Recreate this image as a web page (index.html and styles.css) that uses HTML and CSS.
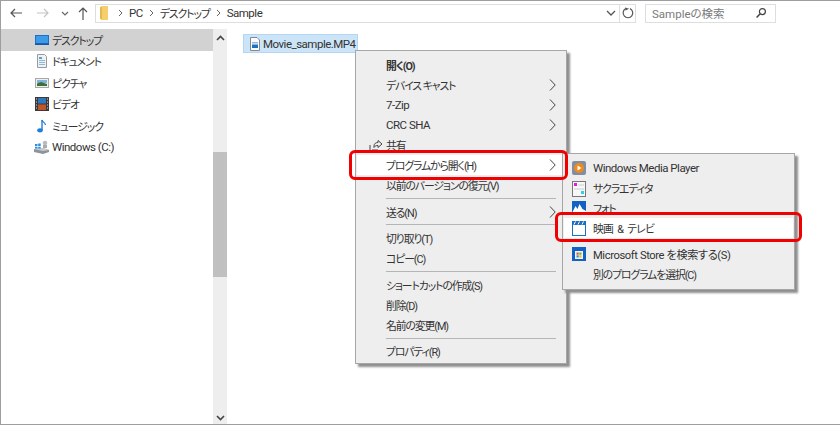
FILE: index.html
```html
<!DOCTYPE html>
<html lang="ja">
<head>
<meta charset="utf-8">
<title>Sample</title>
<link rel="stylesheet" href="styles.css">
</head>
<body>
<div class="window">
  <header class="toolbar">
    <nav class="navs">
      <svg class="nav-btn" width="16" height="16" viewBox="0 0 16 16"><path d="M14 8H3M7 4 3 8l4 4" fill="none" stroke="#555" stroke-width="1.2"/></svg>
      <svg class="nav-btn" width="16" height="16" viewBox="0 0 16 16"><path d="M2 8h11M9 4l4 4-4 4" fill="none" stroke="#c4c4c4" stroke-width="1.2"/></svg>
      <svg class="nav-small" width="10" height="16" viewBox="0 0 10 16"><path d="M2 7l3 3 3-3" fill="none" stroke="#666" stroke-width="1.2"/></svg>
      <svg class="nav-up" width="16" height="16" viewBox="0 0 16 16"><path d="M8 15V3M4 7l4-4 4 4" fill="none" stroke="#555" stroke-width="1.2"/></svg>
    </nav>
    <div class="address">
      <svg class="folder" width="12" height="16" viewBox="0 0 12 16"><path d="M2 1h7v14H2z" fill="#f5cf6e"/><path d="M1 2h2v12H1z" fill="#e6b84a"/></svg>
      <svg class="crumb-sep" width="5" height="8" viewBox="0 0 5 8"><path d="M1 1l3 3-3 3" fill="none" stroke="#666"/></svg><span class="crumb lat">PC</span>
      <svg class="crumb-sep" width="5" height="8" viewBox="0 0 5 8"><path d="M1 1l3 3-3 3" fill="none" stroke="#666"/></svg><span class="crumb ja">デスクトップ</span>
      <svg class="crumb-sep" width="5" height="8" viewBox="0 0 5 8"><path d="M1 1l3 3-3 3" fill="none" stroke="#666"/></svg><span class="crumb lat">Sample</span>
      <svg class="addr-down" width="12" height="10" viewBox="0 0 12 10"><path d="M2 3l4 4 4-4" fill="none" stroke="#555" stroke-width="1.3"/></svg>
      <div class="refresh">
        <svg width="12" height="12" viewBox="0 0 12 12"><path d="M3.5 1.8A4.8 4.8 0 1 0 8 1.6" fill="none" stroke="#555" stroke-width="1.2"/><path d="M7.2 1.8 3 .4 3.4 3.6z" fill="#555"/></svg>
      </div>
    </div>
    <div class="search">
      <span class="search-text">Sampleの検索</span>
      <svg width="12" height="12" viewBox="0 0 12 12"><circle cx="7.4" cy="4.6" r="3" fill="none" stroke="#444" stroke-width="1.2"/><path d="M5.2 6.8 1.6 10.6" stroke="#444" stroke-width="1.5"/></svg>
    </div>
  </header>
  <div class="body">
    <aside class="sidebar">
      <ul class="tree">
        <li class="tree-item selected">
          <svg width="14" height="12" viewBox="0 0 14 12"><rect x="0" y="1" width="14" height="10" fill="#1e6fc8"/><rect x="1" y="2" width="12" height="7" fill="#3c9be8"/><rect x="0" y="9.5" width="14" height="1.5" fill="#17599f"/></svg>
          <span class="ja">デスクトップ</span>
        </li>
        <li class="tree-item">
          <svg width="14" height="14" viewBox="0 0 14 14"><path d="M2.5 .5h7l2 2v11h-9z" fill="#f1f1f1" stroke="#9a9a9a"/><path d="M4 3h3v2H4z" fill="#4fa3dd"/><path d="M4 6.5h6M4 8.5h6M4 10.5h6" stroke="#8db9d8"/></svg>
          <span class="ja">ドキュメント</span>
        </li>
        <li class="tree-item">
          <svg width="14" height="12" viewBox="0 0 14 12"><rect x=".5" y="1.5" width="13" height="9" fill="#eee" stroke="#a8a8a8"/><rect x="2" y="3" width="10" height="3" fill="#7db3dc"/><path d="M2 6.5l4-1.5 6 2v2H2z" fill="#3f6f38"/></svg>
          <span class="ja">ピクチャ</span>
        </li>
        <li class="tree-item">
          <svg width="14" height="14" viewBox="0 0 14 14"><rect width="14" height="14" fill="#3a3a3a"/><rect x="3" y="1" width="8" height="5.5" fill="#2e78c0"/><rect x="3" y="7.5" width="8" height="5.5" fill="#c2562a"/><path d="M1 2h1M1 5h1M1 8h1M1 11h1M12 2h1M12 5h1M12 8h1M12 11h1" stroke="#ddd"/></svg>
          <span class="ja">ビデオ</span>
        </li>
        <li class="tree-item">
          <svg width="14" height="14" viewBox="0 0 14 14"><path d="M7 1v10" stroke="#1f7fd6" stroke-width="1.4"/><ellipse cx="5" cy="11.3" rx="2.8" ry="2.1" fill="#1f7fd6"/><path d="M7 1c.6 2.4 3.4 2.6 3.4 5" fill="none" stroke="#1f7fd6" stroke-width="1.2"/></svg>
          <span class="ja">ミュージック</span>
        </li>
        <li class="tree-item drive">
          <svg width="16" height="14" viewBox="0 0 16 14"><path d="M0 9l9-1 6 2v2l-6 2-9-2z" fill="#8f9499"/><path d="M0 9l9-1 6 2-6 1z" fill="#c9cdd1"/><path d="M1 4h2.500v2.200H1zM4.200 3.500h2.500v2.700H4.200zM1 7h2.500v1.500H1zM4.200 7h2.500v1.500H4.200z" fill="#2f8ddb"/><circle cx="11" cy="3" r="2.300" fill="#b9bcbf"/><path d="M9 5h4v3H9z" fill="#a9acaf"/></svg>
          <span class="lat">Windows (C:)</span>
        </li>
      </ul>
    </aside>
    <div class="scrollbar">
      <svg class="arrow" width="9" height="6" viewBox="0 0 9 6"><path d="M1 5l3.500-3.500L8 5" fill="none" stroke="#444" stroke-width="1.600"/></svg>
      <div class="thumb"></div>
      <svg class="arrow arrow-down" width="9" height="6" viewBox="0 0 9 6"><path d="M1 1l3.500 3.500L8 1" fill="none" stroke="#444" stroke-width="1.600"/></svg>
    </div>
    <main class="files">
      <div class="file">
        <svg width="12" height="14" viewBox="0 0 12 14"><path d="M1.500.5h6.500l2.500 2.500v10.500h-9z" fill="#fbfbfb" stroke="#7f8a94"/><rect x="3" y="5" width="6" height="1.500" fill="#8eb8df"/><rect x="3" y="7.500" width="6" height="3.500" fill="#1f6fc0"/></svg>
        <span class="lat">Movie_sample.MP4</span>
      </div>

      <div class="menu menu-main">
        <div class="item bold"><span class="ja">開く(O)</span></div>
        <div class="item"><span class="ja">デバイス キャスト</span><svg class="chev" width="7" height="12" viewBox="0 0 7 12"><path d="M1 .5 6.200 6 1 11.500" fill="none" stroke="#444"/></svg></div>
        <div class="item"><span class="lat">7-Zip</span><svg class="chev" width="7" height="12" viewBox="0 0 7 12"><path d="M1 .5 6.200 6 1 11.500" fill="none" stroke="#444"/></svg></div>
        <div class="item"><span class="lat">CRC SHA</span><svg class="chev" width="7" height="12" viewBox="0 0 7 12"><path d="M1 .5 6.200 6 1 11.500" fill="none" stroke="#444"/></svg></div>
        <div class="item">
          <svg class="share" width="14" height="14" viewBox="0 0 14 14"><path d="M1 13V7M3 12h6M5 8c0-2.500 2-3.500 4-3.500V2.500L13 6 9 9.500V7.500C7 7.500 6 8 5 9.500z" fill="none" stroke="#444"/></svg>
          <span class="ja">共有</span>
        </div>
        <div class="item active"><span class="ja">プログラムから開く(H)</span><svg class="chev" width="7" height="12" viewBox="0 0 7 12"><path d="M1 .5 6.200 6 1 11.500" fill="none" stroke="#444"/></svg></div>
        <div class="item"><span class="ja">以前のバージョンの復元(V)</span></div>
        <div class="sep"></div>
        <div class="item"><span class="ja">送る(N)</span><svg class="chev" width="7" height="12" viewBox="0 0 7 12"><path d="M1 .5 6.200 6 1 11.500" fill="none" stroke="#444"/></svg></div>
        <div class="sep"></div>
        <div class="item"><span class="ja">切り取り(T)</span></div>
        <div class="item"><span class="ja">コピー(C)</span></div>
        <div class="sep"></div>
        <div class="item"><span class="ja">ショートカットの作成(S)</span></div>
        <div class="item"><span class="ja">削除(D)</span></div>
        <div class="item"><span class="ja">名前の変更(M)</span></div>
        <div class="sep"></div>
        <div class="item"><span class="ja">プロパティ(R)</span></div>
      </div>

      <div class="menu menu-sub">
        <div class="item">
          <svg class="app" width="14" height="14" viewBox="0 0 14 14"><rect width="14" height="14" rx="2" fill="#7f8fa3"/><circle cx="7" cy="7" r="5" fill="#f08a1d"/><path d="M5.500 4.500l4 2.500-4 2.500z" fill="#fff"/></svg>
          <span class="lat">Windows Media Player</span>
        </div>
        <div class="item">
          <svg class="app" width="14" height="16" viewBox="0 0 14 16"><rect x=".5" y=".5" width="13" height="15" fill="#f7f7f7" stroke="#777"/><rect x="2" y="2" width="3" height="3" fill="#e21ae0"/><rect x="9" y="10" width="3" height="3" fill="#2bd4e6"/><path d="M6 4h6M2 8h10" stroke="#ccc"/></svg>
          <span class="ja">サクラエディタ</span>
        </div>
        <div class="item">
          <svg class="app" width="14" height="14" viewBox="0 0 14 14"><rect width="14" height="14" fill="#1262c4"/><path d="M0 12l3.500-7 2 3 2-5 3 5 3.500 2v4H0z" fill="#fff"/></svg>
          <span class="ja">フォト</span>
        </div>
        <div class="item active">
          <svg class="app" width="14" height="15" viewBox="0 0 14 15"><rect x=".5" y=".5" width="13" height="14" fill="#fff" stroke="#1f6fc0"/><rect width="14" height="4" fill="#1f6fc0"/><path d="M2 3.500l1.500-3M6 3.500l1.500-3M10 3.500l1.500-3" stroke="#fff"/></svg>
          <span class="ja wide">映画 &amp; テレビ</span>
        </div>
        <div class="sep"></div>
        <div class="item">
          <svg class="app" width="14" height="14" viewBox="0 0 14 14"><rect width="14" height="14" fill="#1262c4"/><rect x="3" y="4" width="8" height="8" fill="#f4f4f4"/><rect x="4.500" y="5.500" width="2.200" height="2.200" fill="#e3502b"/><rect x="7.300" y="5.500" width="2.200" height="2.200" fill="#6fb52c"/><rect x="4.500" y="8.300" width="2.200" height="2.200" fill="#2b8fe3"/><rect x="7.300" y="8.300" width="2.200" height="2.200" fill="#f3b71b"/></svg>
          <span class="mix">Microsoft Store を検索する(S)</span>
        </div>
        <div class="item"><span class="ja">別のプログラムを選択(C)</span></div>
      </div>

      <div class="callout callout-open"></div>
      <div class="callout callout-tv"></div>
    </main>
  </div>
</div>
</body>
</html>
```
FILE: styles.css
```css
* { box-sizing: border-box; }
html, body { margin: 0; padding: 0; }
body {
  width: 840px;
  height: 425px;
  overflow: hidden;
  background: #fff;
  font-family: Roboto, "Noto Sans CJK JP", sans-serif;
  font-size: 11.5px;
  font-feature-settings: "palt";
  color: #333;
}
.lat { letter-spacing: -0.5px; }
.ja { font-size: 10.8px; letter-spacing: -1.05px; }
.ja.wide { letter-spacing: -0.7px; word-spacing: 2px; }
.mix { font-size: 11.2px; letter-spacing: -0.4px; }
.window {
  width: 840px;
  height: 425px;
  border: solid #9e9e9e;
  border-width: 1px 0 1px 1px;
  display: flex;
  flex-direction: column;
  background: #fff;
}
.toolbar {
  height: 27px;
  flex: none;
  display: flex;
  align-items: center;
  padding: 0 0 3px 7px;
  background: #fff;
}
.navs { width: 87px; flex: none; display: flex; align-items: center; }
.nav-btn { margin-right: 11px; }
.nav-small { margin: 0 5px 0 -2px; }
.address {
  width: 541px;
  height: 19px;
  flex: none;
  display: flex;
  align-items: center;
  border: 1px solid #dedede;
  padding-left: 3px;
}
.folder { margin-right: 7px; }
.crumb-sep { flex: none; margin-right: 6px; }
.crumb { margin-right: 6px; }
.addr-down { margin-left: auto; margin-right: 2px; }
.refresh {
  width: 16px;
  height: 100%;
  border-left: 1px solid #dedede;
  display: flex;
  align-items: center;
  justify-content: center;
}
.search {
  width: 131px;
  height: 19px;
  flex: none;
  margin-left: 9px;
  display: flex;
  align-items: center;
  justify-content: space-between;
  border: 1px solid #dedede;
  padding: 0 8px 0 6px;
  color: #7a7a7a;
}
.body { flex: 1; min-height: 0; display: flex; }
.sidebar { width: 212px; flex: none; }
.tree { list-style: none; margin: 0; padding: 1px 0 0; }
.tree-item {
  height: 21.5px;
  display: flex;
  align-items: center;
  padding-left: 34px;
}
.tree-item svg { width: 14px; margin-right: 3px; flex: none; }
.tree-item.selected { background: #d2d2d2; }
.tree-item.drive { padding-left: 33px; }
.tree-item.drive svg { width: 16px; margin-right: 2px; }
.scrollbar {
  width: 14px;
  flex: none;
  margin-top: 1px;
  background: #eeeeee;
  display: flex;
  flex-direction: column;
  align-items: center;
  padding-top: 6px;
}
.arrow { flex: none; }
.thumb { width: 100%; height: 125px; margin-top: 111px; background: #c0c0c0; flex: none; }
.arrow-down { margin-top: auto; margin-bottom: 3px; }
.files { flex: 1; position: relative; }
.file {
  position: absolute;
  left: 16px;
  top: 6px;
  width: 115px;
  height: 19px;
  display: flex;
  align-items: center;
  gap: 2px;
  padding-left: 5px;
  background: #cce4f8;
  border: 1px solid #b5d6f2;
  white-space: nowrap;
}
.file svg { flex: none; }
.menu {
  position: absolute;
  background: #eeeeee;
  border: 1px solid #a6a6a6;
  box-shadow: 3px 3px 2px #8f8f8f;
  padding: 4px 1px;
}
.menu-main { left: 128px; top: 22px; width: 212px; height: 314px; }
.menu-sub { left: 335px; top: 125px; width: 233px; height: 137px; }
.item {
  height: 20px;
  display: flex;
  align-items: center;
  padding-left: 29px;
  position: relative;
  white-space: nowrap;
}
.item.bold { font-weight: 700; }
.item.active { background: #fff; }
.chev { position: absolute; right: 9px; top: 4px; }
.share { position: absolute; left: 12px; top: 3px; }
.sep { height: 6.6px; display: flex; align-items: center; padding: 0 9px 0 29px; }
.sep::after { content: ""; flex: 1; height: 1px; background: #b5b5b5; }
.menu-sub .item .app { position: absolute; left: 8px; top: 3px; }
.menu-sub .sep { padding: 0 25px 0 1px; height: 6px; }
.callout {
  position: absolute;
  border: 3.5px solid #f00000;
  border-radius: 6px;
  pointer-events: none;
}
.callout-open { left: 122px; top: 122px; width: 219px; height: 30px; }
.callout-tv { left: 328px; top: 184px; width: 247px; height: 30px; }
```
